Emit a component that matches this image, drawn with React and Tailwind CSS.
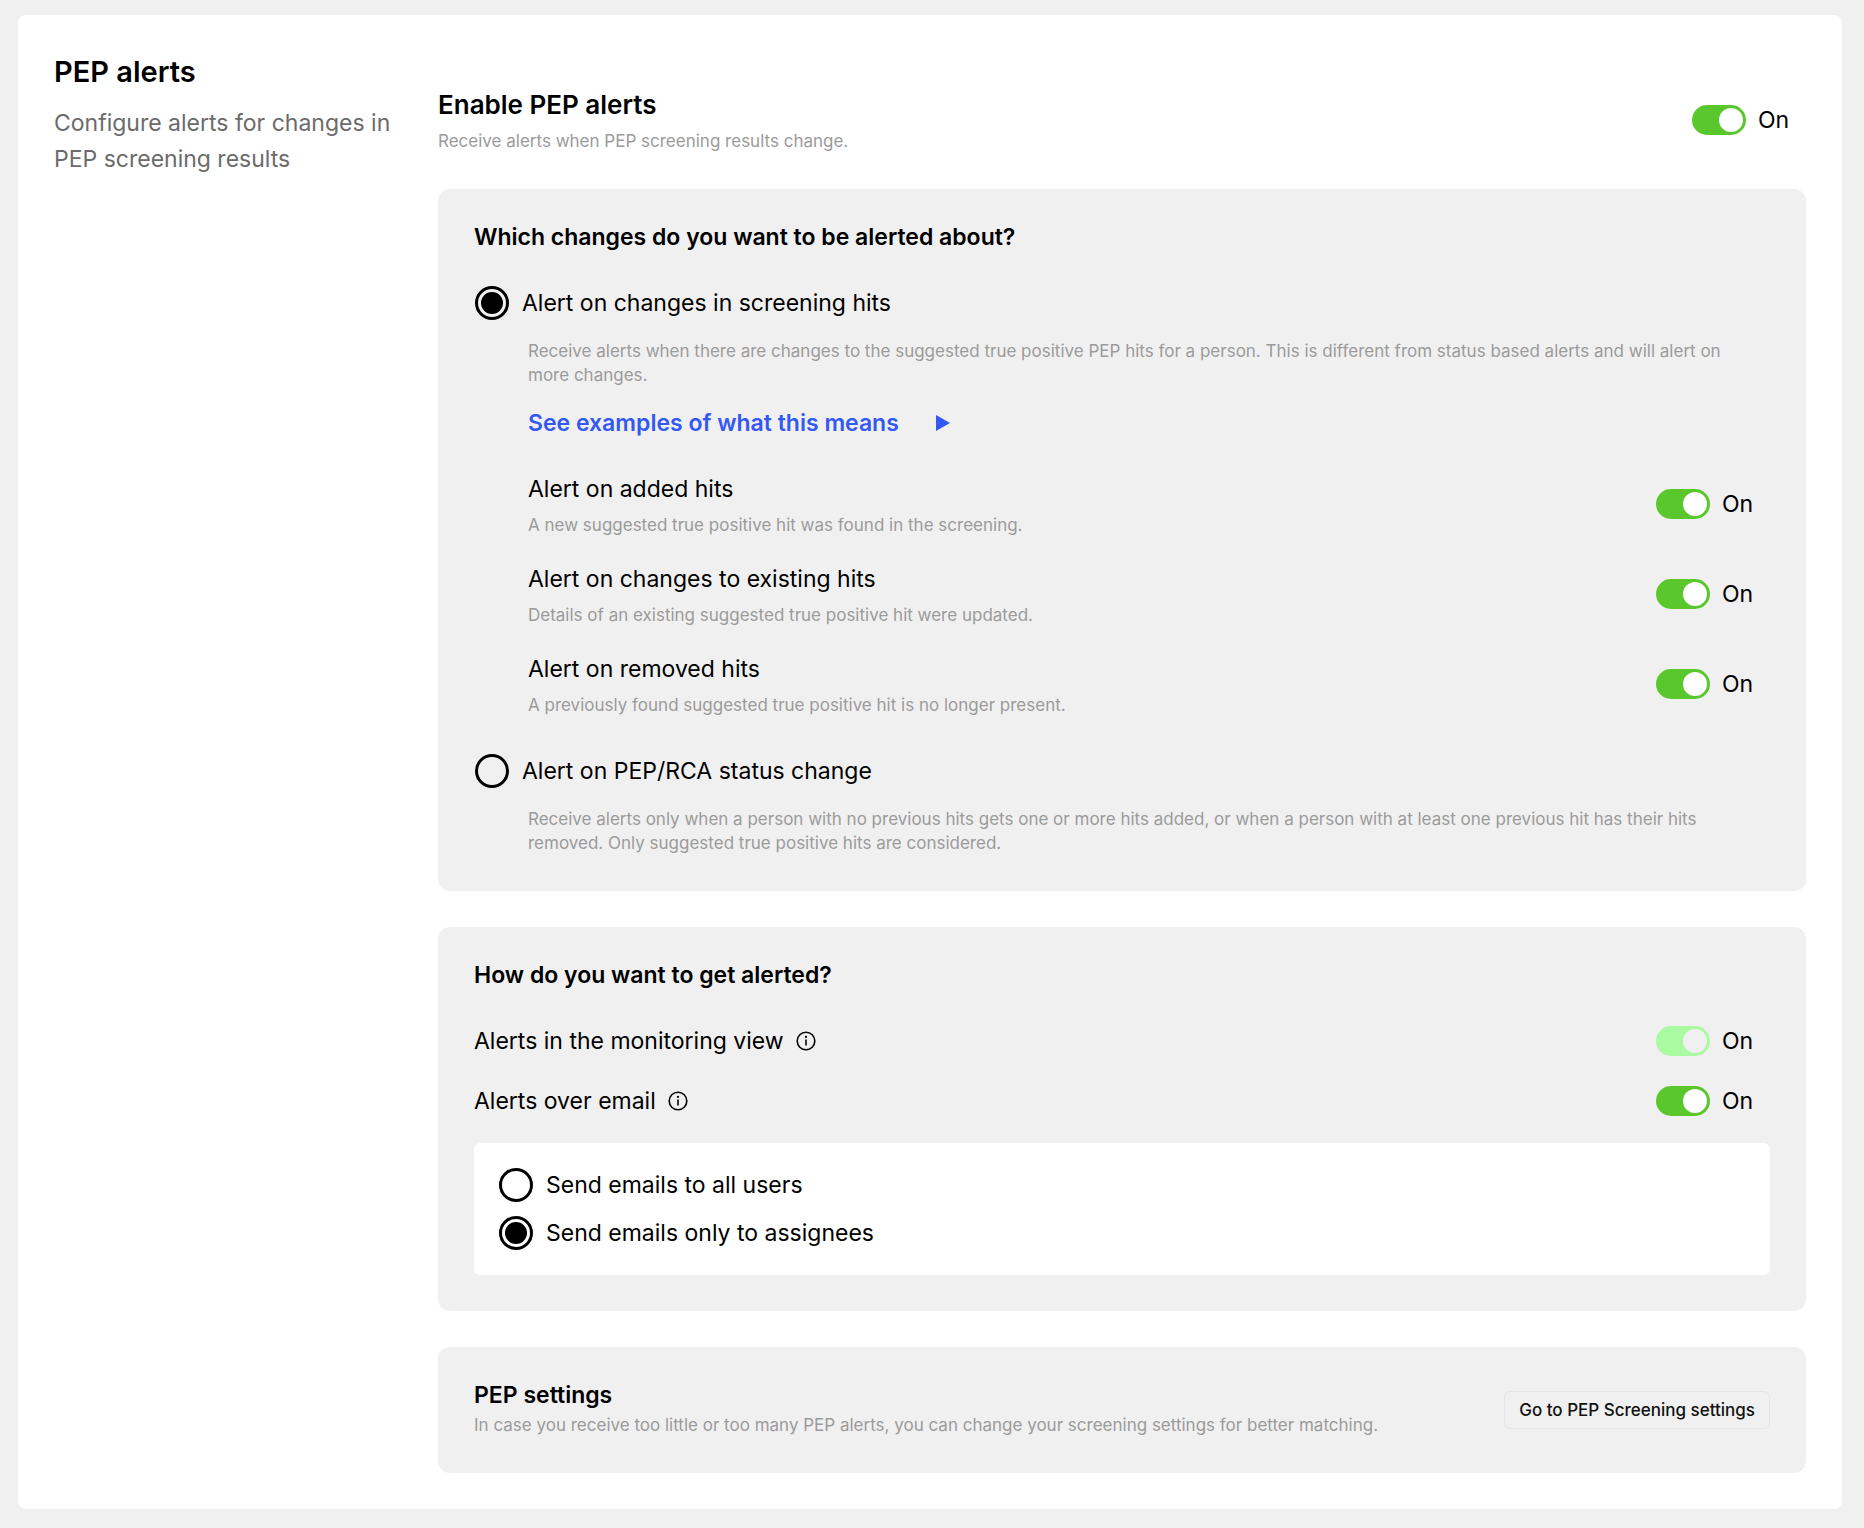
import { useState } from 'react'

const hitToggles = [
  {
    id: 'added-hits',
    title: 'Alert on added hits',
    description: 'A new suggested true positive hit was found in the screening.',
  },
  {
    id: 'changed-hits',
    title: 'Alert on changes to existing hits',
    description: 'Details of an existing suggested true positive hit were updated.',
  },
  {
    id: 'removed-hits',
    title: 'Alert on removed hits',
    description: 'A previously found suggested true positive hit is no longer present.',
  },
]

function Toggle({ id, disabled = false }) {
  const [on, setOn] = useState(true)
  return (
    <div className="flex w-[114px] shrink-0 items-center gap-3">
      <input
        id={id}
        type="checkbox"
        role="switch"
        checked={on}
        disabled={disabled}
        onChange={e => setOn(e.target.checked)}
        className="flex h-[30px] w-[54px] cursor-pointer appearance-none items-center rounded-full bg-[#9e9e9e] p-[3px] before:h-6 before:w-6 before:rounded-full before:bg-white checked:justify-end checked:bg-[#5ac82d] disabled:cursor-default disabled:checked:bg-[#aafaa2] disabled:before:bg-[#f0f0f0]"
      />
      <span className="text-[23px] leading-9">{on ? 'On' : 'Off'}</span>
    </div>
  )
}

function RadioOption({ name, value, selected, onSelect, children }) {
  return (
    <label className="flex cursor-pointer items-center gap-3 text-[23px] leading-9">
      <input
        type="radio"
        name={name}
        value={value}
        checked={selected === value}
        onChange={() => onSelect(value)}
        className="m-px grid h-[34px] w-[34px] shrink-0 appearance-none place-content-center rounded-full border-3 border-black before:h-[22px] before:w-[22px] before:rounded-full checked:before:bg-black"
      />
      {children}
    </label>
  )
}

function Description({ children, className = '' }) {
  return <p className={`text-[17px] leading-6 text-[#9b9b9b] ${className}`}>{children}</p>
}

function InfoButton({ label }) {
  return (
    <button type="button" aria-label={label} className="h-6 w-6 cursor-pointer">
      <svg viewBox="0 0 24 24" className="h-6 w-6" fill="none" stroke="currentColor" strokeWidth="1.6">
        <circle cx="12" cy="12" r="8.8" />
        <path d="M12 10.4v6.2" />
        <circle cx="12" cy="7.9" r="1.1" fill="currentColor" stroke="none" />
      </svg>
    </button>
  )
}

function Panel({ children, className = '' }) {
  return <section className={`rounded-xl bg-[#f0f0f0] p-9 ${className}`}>{children}</section>
}

export default function App() {
  const [alertMode, setAlertMode] = useState('hits')
  const [recipients, setRecipients] = useState('assignees')

  return (
    <div className="min-h-screen bg-[#f0f0f0] pt-[15px] pr-[22px] pb-[19px] pl-[18px] font-[Inter,'Liberation_Sans',sans-serif] text-black">
      <main className="flex gap-10 rounded-lg bg-white p-9">
        <header className="w-[344px] shrink-0">
          <h1 className="text-[29px] leading-[42px] font-semibold">PEP alerts</h1>
          <p className="mt-3 text-[23px] leading-9 text-[#6b6b6b]">
            Configure alerts for changes in PEP screening results
          </p>
        </header>

        <div className="flex min-w-0 flex-1 flex-col gap-9 pt-9">
          <div className="flex items-center justify-between">
            <div>
              <label htmlFor="enable-pep" className="block text-[26px] leading-9 font-semibold">
                Enable PEP alerts
              </label>
              <Description className="mt-[6px]">Receive alerts when PEP screening results change.</Description>
            </div>
            <Toggle id="enable-pep" />
          </div>

          <Panel>
            <h2 className="text-[23px] leading-6 font-semibold">Which changes do you want to be alerted about?</h2>
            <div className="mt-9">
              <RadioOption name="alert-mode" value="hits" selected={alertMode} onSelect={setAlertMode}>
                Alert on changes in screening hits
              </RadioOption>
              <div className="pl-[54px]">
                <Description className="mt-[18px] pr-6">
                  Receive alerts when there are changes to the suggested true positive PEP hits for a person. This is
                  different from status based alerts and will alert on more changes.
                </Description>
                <button
                  type="button"
                  className="mt-[18px] flex cursor-pointer items-center gap-9 text-[23px] leading-9 font-semibold text-[#3358f4]"
                >
                  See examples of what this means
                  <svg viewBox="0 0 16 18" className="h-[18px] w-4" fill="currentColor">
                    <path d="M1 1v16l14-8z" />
                  </svg>
                </button>
                <ul className="mt-[30px] flex flex-col gap-6">
                  {hitToggles.map(t => (
                    <li key={t.id} className="flex items-center justify-between">
                      <div>
                        <label htmlFor={t.id} className="block text-[23px] leading-9">
                          {t.title}
                        </label>
                        <Description className="mt-[6px]">{t.description}</Description>
                      </div>
                      <Toggle id={t.id} />
                    </li>
                  ))}
                </ul>
              </div>
            </div>
            <div className="mt-9">
              <RadioOption name="alert-mode" value="status" selected={alertMode} onSelect={setAlertMode}>
                Alert on PEP/RCA status change
              </RadioOption>
              <Description className="mt-[18px] pr-6 pl-[54px]">
                Receive alerts only when a person with no previous hits gets one or more hits added, or when a person
                with at least one previous hit has their hits removed. Only suggested true positive hits are considered.
              </Description>
            </div>
          </Panel>

          <Panel>
            <h2 className="text-[23px] leading-6 font-semibold">How do you want to get alerted?</h2>
            <div className="mt-9 flex items-center justify-between">
              <div className="flex items-center gap-[10px]">
                <label htmlFor="monitoring-view" className="text-[23px] leading-9">
                  Alerts in the monitoring view
                </label>
                <InfoButton label="About alerts in the monitoring view" />
              </div>
              <Toggle id="monitoring-view" disabled />
            </div>
            <div className="mt-6 flex items-center justify-between">
              <div className="flex items-center gap-[10px]">
                <label htmlFor="email-alerts" className="text-[23px] leading-9">
                  Alerts over email
                </label>
                <InfoButton label="About alerts over email" />
              </div>
              <Toggle id="email-alerts" />
            </div>
            <div className="mt-6 flex flex-col gap-3 rounded-md bg-white p-6">
              <RadioOption name="recipients" value="all" selected={recipients} onSelect={setRecipients}>
                Send emails to all users
              </RadioOption>
              <RadioOption name="recipients" value="assignees" selected={recipients} onSelect={setRecipients}>
                Send emails only to assignees
              </RadioOption>
            </div>
          </Panel>

          <Panel className="flex items-center justify-between gap-6">
            <div>
              <h2 className="text-[23px] leading-6 font-semibold">PEP settings</h2>
              <Description className="mt-[6px]">
                In case you receive too little or too many PEP alerts, you can change your screening settings for better
                matching.
              </Description>
            </div>
            <button
              type="button"
              className="shrink-0 cursor-pointer rounded-md border border-[#e5e5e5] px-[14px] text-[17px] leading-9 font-medium text-[#111]"
            >
              Go to PEP Screening settings
            </button>
          </Panel>
        </div>
      </main>
    </div>
  )
}
